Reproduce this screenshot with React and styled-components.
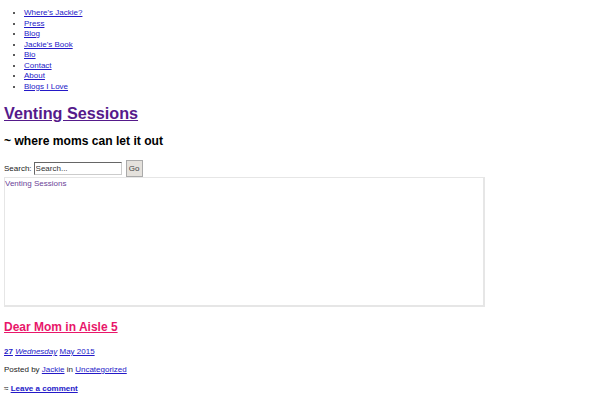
import React from "react";
import styled, { createGlobalStyle } from "styled-components";

const Global = createGlobalStyle`
  html, body { margin: 0; padding: 0; background: #fff; }
  body { font-family: "Liberation Sans", Arial, sans-serif; font-size: 8px; color: #222; }
`;

const Page = styled.div`
  padding: 8px 4px 0 4px;
  width: 592px;
  box-sizing: border-box;
`;

const Menu = styled.ul`
  margin: 0;
  padding: 0 0 0 20px;
  list-style: disc;
  font-size: 8px;
  line-height: 10.5px;
`;

const Link = styled.a`
  color: ${(p) => p.$color || "#2419c8"};
  text-decoration: underline;
  font-weight: ${(p) => (p.$bold ? "bold" : "inherit")};
  font-style: ${(p) => (p.$italic ? "italic" : "inherit")};
`;

const SiteTitle = styled.h1`
  margin: 12px 0 0 0;
  font-size: 16.2px;
  line-height: 18px;
  font-weight: bold;
`;

const Tagline = styled.h2`
  margin: 12px 0 0 0;
  font-size: 12.1px;
  line-height: 14px;
  font-weight: bold;
  color: #000;
`;

const SearchRow = styled.form`
  display: flex;
  align-items: center;
  margin-top: 12px;
  height: 17px;
  font-size: 8px;
  color: #222;
`;

const Label = styled.label`
  margin-right: 2px;
`;

const Input = styled.input`
  width: 88px;
  height: 13px;
  box-sizing: border-box;
  border: 1px solid #666;
  border-right-color: #ccc;
  border-bottom-color: #ccc;
  padding: 0 1px;
  font: 8px "Liberation Sans", Arial, sans-serif;
  color: #333;
  &::placeholder { color: #333; }
`;

const Button = styled.button`
  margin-left: 4px;
  width: 17px;
  height: 17px;
  box-sizing: border-box;
  border: 1px solid #aaa;
  background: #e4e1dc;
  font: 8px "Liberation Sans", Arial, sans-serif;
  color: #444;
  padding: 0;
`;

const Frame = styled.div`
  width: 481px;
  height: 130px;
  box-sizing: border-box;
  border: 2px solid #e6e6e6;
  border-top-width: 1px;
  border-left-width: 1px;
  padding: 1px 0 0 0;
  font-size: 8px;
  line-height: 10px;
  color: #6b3f98;
`;

const PostTitle = styled.h2`
  margin: 13px 0 0 0;
  font-size: 12px;
  line-height: 14px;
  font-weight: bold;
`;

const Meta = styled.p`
  margin: ${(p) => p.$mt || "0"} 0 0 0;
  font-size: 8px;
  line-height: 10px;
  color: #222;
`;

const items = ["Where's Jackie?", "Press", "Blog", "Jackie's Book", "Bio", "Contact", "About", "Blogs I Love"];

export default function App() {
  return (
    <>
      <Global />
      <Page>
        <Menu>
          {items.map((t) => (
            <li key={t}>
              <Link href="#">{t}</Link>
            </li>
          ))}
        </Menu>
        <SiteTitle>
          <Link href="#" $color="#551a8b">Venting Sessions</Link>
        </SiteTitle>
        <Tagline>~ where moms can let it out</Tagline>
        <SearchRow onSubmit={(e) => e.preventDefault()}>
          <Label>Search:</Label>
          <Input placeholder="Search..." />
          <Button type="button">Go</Button>
        </SearchRow>
        <Frame>Venting Sessions</Frame>
        <PostTitle>
          <Link href="#" $color="#e8166a">Dear Mom in Aisle 5</Link>
        </PostTitle>
        <Meta $mt="13px">
          <Link href="#" $bold>27</Link>{" "}
          <Link href="#" $italic>Wednesday</Link>{" "}
          <Link href="#">May 2015</Link>
        </Meta>
        <Meta $mt="8px">
          Posted by <Link href="#">Jackie</Link> in <Link href="#">Uncategorized</Link>
        </Meta>
        <Meta $mt="9px">
          ≈ <Link href="#" $bold>Leave a comment</Link>
        </Meta>
      </Page>
    </>
  );
}
